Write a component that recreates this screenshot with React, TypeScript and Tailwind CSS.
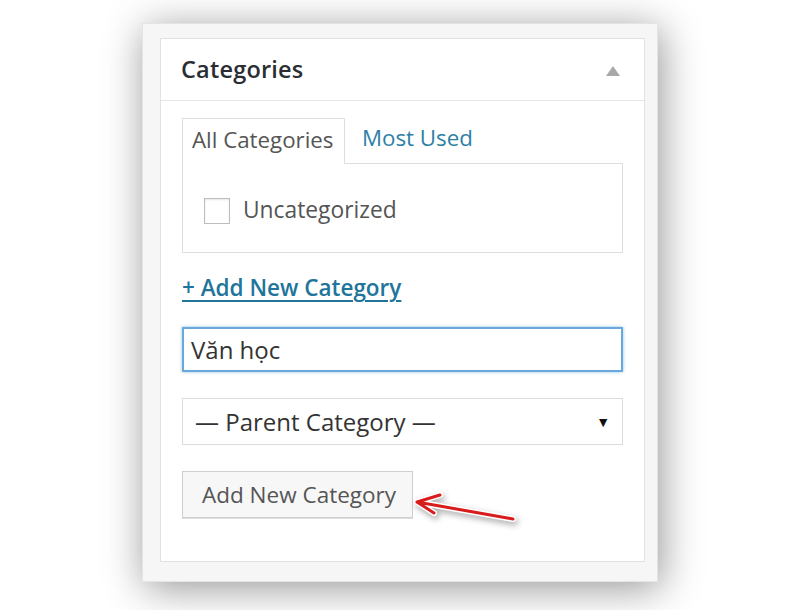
export default function App() {
  return (
    <div className="relative min-h-[610px] w-[800px] bg-white pl-[142px] pt-[23px] font-['Open_Sans',sans-serif]">
      <div className="h-[559px] w-[516px] border border-[#e4e4e4] bg-[#f6f6f6] pb-[19px] pl-[17px] pr-[12px] pt-[14px] shadow-[3px_6px_38px_rgba(0,0,0,0.42)]">
        <div className="flex h-full flex-col border border-[#e2e2e2] bg-white">
          {/* header */}
          <div className="flex h-[62px] items-center justify-between border-b border-[#e6e6e6] pl-[20px] pr-[24px]">
            <h2 className="text-[23.5px] font-semibold tracking-[0.2px] text-[#2a2e33]">Categories</h2>
            <svg width="14" height="10" viewBox="0 0 14 10" className="mt-[2px]">
              <polygon points="7,0 14,10 0,10" fill="#a8a8a8" />
            </svg>
          </div>

          <div className="pl-[21px] pr-[21px] pt-[16px]">
            {/* tabs */}
            <div className="flex items-end">
              <div className="relative z-10 -mb-px flex h-[46px] w-[163px] items-center border border-b-0 border-[#dedede] bg-white pb-[4px] pl-[9px] text-[22.3px] text-[#555]">
                All Categories
              </div>
              <div className="flex h-[46px] items-center pb-[4px] pl-[17px] text-[22.3px] text-[#2e7fa5]">Most Used</div>
            </div>
            <div className="h-[90px] border border-[#dedede] pl-[21px] pt-[29px]">
              <label className="flex items-center gap-[13px]">
                <span className="h-[26px] w-[26px] border border-[#bdbdbd] bg-white shadow-[inset_0_1px_2px_rgba(0,0,0,0.1)]" />
                <span className="pb-[2px] text-[22.8px] text-[#555]">Uncategorized</span>
              </label>
            </div>

            {/* add new */}
            <div className="mt-[20px] h-[30px] text-[22.5px] font-semibold leading-[30px] text-[#21759b]">
              <span className="underline decoration-[2px] underline-offset-[4px]">+ Add New Category</span>
            </div>

            <div className="mt-[24px] flex h-[45px] items-center border-2 border-[#6aa7dc] pl-[7px] text-[24px] text-[#333] shadow-[0_0_3px_rgba(30,140,190,0.5)]">
              Văn học
            </div>

            <div className="mt-[26px] flex h-[47px] items-center justify-between border border-[#dcdcdc] pl-[12px] pr-[12px] text-[24px] text-[#333]">
              <span>— Parent Category —</span>
              <span className="text-[14px] text-[#111]">▼</span>
            </div>

            <button className="mt-[26px] flex h-[47px] w-[231px] items-center border border-[#cfcfcf] bg-[#f7f7f7] pl-[19px] text-[22.5px] text-[#555] shadow-[0_1px_0_#ddd]">
              Add New Category
            </button>
          </div>
        </div>
      </div>

      {/* annotation arrow */}
      <svg
        className="absolute left-[405px] top-[484px] drop-shadow-[2px_3px_3px_rgba(0,0,0,0.35)]"
        width="120"
        height="48"
        viewBox="0 0 120 48"
      >
        <g fill="none" strokeLinecap="round" strokeLinejoin="round">
          <path d="M108 35 L12 18 M35 11 L12 18 L29 29" stroke="#fff" strokeWidth="6" />
          <path d="M108 35 L12 18 M35 11 L12 18 L29 29" stroke="#d81c1c" strokeWidth="3" />
        </g>
      </svg>
    </div>
  );
}
